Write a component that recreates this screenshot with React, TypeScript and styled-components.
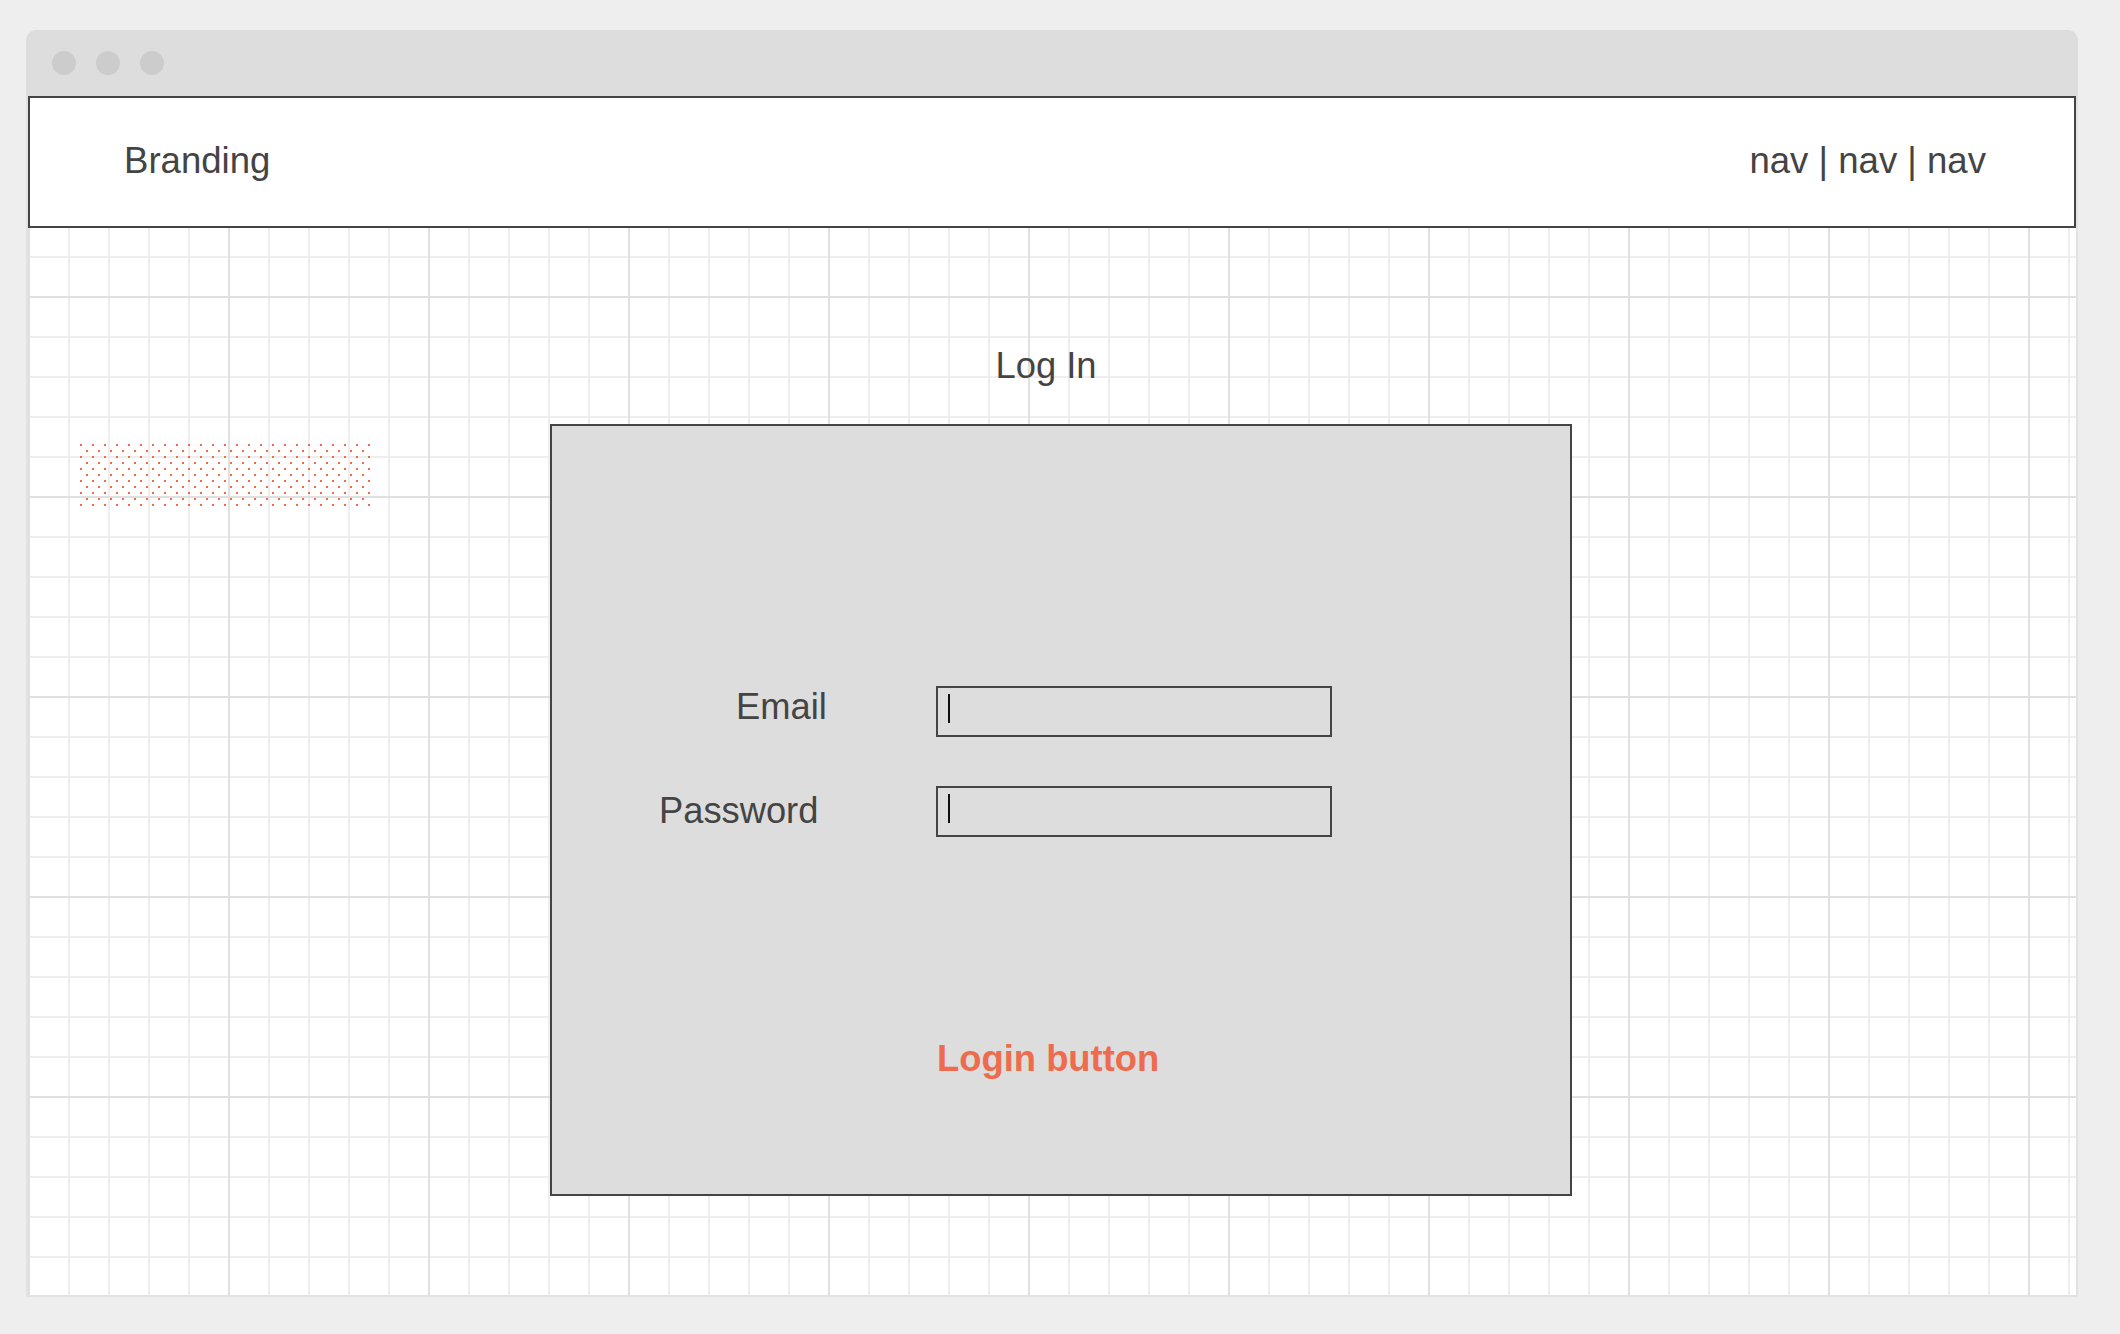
import styled, { createGlobalStyle } from 'styled-components';

const GlobalStyle = createGlobalStyle`
  html, body {
    margin: 0;
    padding: 0;
    background: #eeeeee;
    font-family: "Liberation Sans", Arial, sans-serif;
    color: #444444;
  }
`;

const Page = styled.div`
  width: 2120px;
  height: 1334px;
  box-sizing: border-box;
  padding: 30px 0 0 26px;
`;

const Window = styled.div`
  width: 2052px;
  display: flex;
  flex-direction: column;
`;

const TitleBar = styled.div`
  height: 66px;
  background: #dddddd;
  border-radius: 10px 10px 0 0;
  display: flex;
  align-items: center;
  gap: 20px;
  padding-left: 26px;
  box-sizing: border-box;
`;

const Light = styled.span`
  width: 24px;
  height: 24px;
  border-radius: 50%;
  background: #cccccc;
`;

const Body = styled.div`
  height: 1201px;
  box-sizing: border-box;
  border: 2px solid #e2e2e2;
  border-top: none;
  background-color: #ffffff;
  background-image:
    linear-gradient(to right, #e0e0e0 0 2px, transparent 2px),
    linear-gradient(to bottom, #e0e0e0 0 2px, transparent 2px),
    linear-gradient(to right, #eeeeee 0 2px, transparent 2px),
    linear-gradient(to bottom, #eeeeee 0 2px, transparent 2px);
  background-size: 200px 200px, 200px 200px, 40px 40px, 40px 40px;
  display: flex;
  flex-direction: column;
`;

const Header = styled.header`
  height: 132px;
  box-sizing: border-box;
  border: 2px solid #444444;
  background: #ffffff;
  display: flex;
  align-items: center;
  justify-content: space-between;
  padding: 0 88px 1px 94px;
  font-size: 36.6px;
  line-height: 1;
`;

const Brand = styled.div``;

const Nav = styled.nav`
  white-space: pre;
`;

const Main = styled.main`
  display: grid;
  grid-template-columns: 522px 1022px;
  grid-template-rows: 36px auto;
  row-gap: 40px;
  padding-top: 120px;
`;

const Title = styled.h1`
  grid-column: 2;
  grid-row: 1;
  margin: 0;
  padding-right: 30px;
  text-align: center;
  font-size: 36.4px;
  font-weight: 400;
  line-height: 1;
`;

const Aside = styled.aside`
  grid-column: 1;
  grid-row: 2;
  padding: 20px 0 0 52px;
`;

const Card = styled.section`
  grid-column: 2;
  grid-row: 2;
  height: 772px;
  box-sizing: border-box;
  border: 2px solid #444444;
  background: #dddddd;
  padding: 260px 0 0 104px;
`;

const Form = styled.form`
  display: grid;
  grid-template-columns: 280px 396px;
  grid-auto-rows: 51px;
  row-gap: 49px;
`;

const Label = styled.label<{ $left: number; $top: number }>`
  grid-column: 1;
  font-size: 36.3px;
  line-height: 1;
  align-self: start;
  margin-left: ${(p) => p.$left}px;
  margin-top: ${(p) => p.$top}px;
`;

const Field = styled.div`
  grid-column: 2;
  box-sizing: border-box;
  border: 2px solid #444444;
  padding: 6px 10px;
  display: flex;
  align-items: flex-start;
`;

const Caret = styled.span`
  width: 2px;
  height: 29px;
  background: #111111;
`;

const LoginButton = styled.button`
  grid-column: 2;
  justify-self: start;
  align-self: start;
  margin: 155px 0 0 1px;
  padding: 0;
  border: none;
  background: none;
  color: #ee6c4d;
  font-family: "Liberation Sans", Arial, sans-serif;
  font-weight: 700;
  font-size: 36.4px;
  line-height: 1;
  cursor: pointer;
`;

const Dots = () => (
  <svg width="292" height="62" viewBox="0 0 292 62">
    <defs>
      <pattern id="dots" width="12" height="12" patternUnits="userSpaceOnUse">
        <rect x="0" y="0" width="2" height="2" fill="#f0694b" />
        <rect x="6" y="6" width="2" height="2" fill="#f0694b" />
      </pattern>
    </defs>
    <rect width="292" height="62" fill="url(#dots)" />
  </svg>
);

export default function App() {
  return (
    <>
      <GlobalStyle />
      <Page>
        <Window>
          <TitleBar>
            <Light />
            <Light />
            <Light />
          </TitleBar>
          <Body>
            <Header>
              <Brand>Branding</Brand>
              <Nav>nav | nav | nav</Nav>
            </Header>
            <Main>
              <Title>Log In</Title>
              <Aside>
                <Dots />
              </Aside>
              <Card>
                <Form onSubmit={(e) => e.preventDefault()}>
                  <Label $left={80} $top={3}>Email</Label>
                  <Field>
                    <Caret />
                  </Field>
                  <Label $left={3} $top={7}>Password</Label>
                  <Field>
                    <Caret />
                  </Field>
                  <LoginButton type="submit">Login button</LoginButton>
                </Form>
              </Card>
            </Main>
          </Body>
        </Window>
      </Page>
    </>
  );
}
